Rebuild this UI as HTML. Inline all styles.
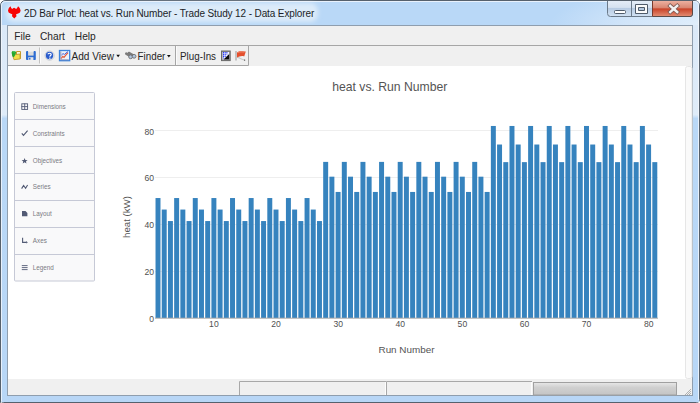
<!DOCTYPE html>
<html><head><meta charset="utf-8">
<style>
*{margin:0;padding:0;box-sizing:border-box}
html,body{width:700px;height:403px;overflow:hidden;background:#fff}
body{position:relative;font-family:"Liberation Sans",sans-serif}
.a{position:absolute}
</style></head><body>
<svg class="a" style="left:0;top:0" width="700" height="403" viewBox="0 0 700 403" font-family="Liberation Sans">
<defs>
<radialGradient id="gGlowR" gradientUnits="userSpaceOnUse" cx="700" cy="24" r="150" gradientTransform="translate(700,24) scale(1,0.25) translate(-700,-24)">
 <stop offset="0" stop-color="#e0eefb" stop-opacity="1"/><stop offset="0.5" stop-color="#dbeafa" stop-opacity="0.7"/><stop offset="1" stop-color="#d8e8fa" stop-opacity="0"/>
</radialGradient>
<filter id="blur" x="-10%" y="-50%" width="120%" height="200%"><feGaussianBlur stdDeviation="2.2"/></filter>
<linearGradient id="gTitle" x1="0" y1="0" x2="1" y2="0">
 <stop offset="0" stop-color="#d6e6f8"/><stop offset="0.45" stop-color="#c4ddf7"/><stop offset="1" stop-color="#b9d7f7"/>
</linearGradient>
<linearGradient id="gLeft" x1="0" y1="0" x2="0" y2="1">
 <stop offset="0" stop-color="#dbe9f8"/><stop offset="0.238" stop-color="#dfecf9"/><stop offset="0.248" stop-color="#b9d8f7"/><stop offset="1" stop-color="#b8d7f7"/>
</linearGradient>
<linearGradient id="gBtn" x1="0" y1="0" x2="0" y2="1">
 <stop offset="0" stop-color="#e6eef8"/><stop offset="0.45" stop-color="#d6e2f0"/><stop offset="0.5" stop-color="#b7cbe3"/><stop offset="1" stop-color="#d2e2f3"/>
</linearGradient>
<linearGradient id="gClose" x1="0" y1="0" x2="0" y2="1">
 <stop offset="0" stop-color="#eeb3a3"/><stop offset="0.45" stop-color="#d98874"/><stop offset="0.55" stop-color="#c9442a"/><stop offset="1" stop-color="#e28a70"/>
</linearGradient>
<linearGradient id="gProg" x1="0" y1="0" x2="0" y2="1">
 <stop offset="0" stop-color="#e8e8e8"/><stop offset="0.4" stop-color="#d0d0d0"/><stop offset="1" stop-color="#c4c4c4"/>
</linearGradient>
</defs>
<!-- window frame -->
<path d="M0.5 402.5 V6 Q0.5 0.5 6 0.5 H694 Q699.5 0.5 699.5 6 V399.5 Q699.5 402.5 696.5 402.5 H3.5 Q0.5 402.5 0.5 399.5 Z" fill="#b8d6f6" stroke="#56616d" stroke-width="1"/>
<rect x="1" y="1" width="698" height="24" fill="#b9d8f7" rx="5"/>
<rect x="1" y="25" width="6" height="377" fill="url(#gLeft)"/>
<rect x="693" y="25" width="6" height="377" fill="url(#gLeft)"/>
<rect x="6" y="3" width="312" height="19" rx="8" fill="#dcebf9" filter="url(#blur)"/>
<rect x="530" y="1" width="169" height="24" fill="url(#gGlowR)"/>
<path d="M1.5 401.5 V6 Q1.5 1.5 6 1.5 H694 Q698.5 1.5 698.5 6 V400" fill="none" stroke="#f4f8fc" stroke-opacity="0.8" stroke-width="1"/>
<!-- client -->
<rect x="7.5" y="25.5" width="685" height="370" fill="#f0f0f0" stroke="#8f9eae" stroke-width="1"/>
<!-- title icon -->
<path fill="#f80404" d="M10.5 6.2 L11.2 8 L12.2 9.1 L13.1 8.3 L14.1 7.7 L15 8.3 L16.1 9.1 L17.1 8 L18.1 6.2 L19.7 8.1 L20.6 10.6 L20 12.4 L18.2 13.4 L16.1 14.3 L16.5 16.2 L14.3 18.6 L12 16.2 L12.3 14.3 L10.4 13.4 L8.6 12.4 L8 10.6 L8.8 8.1 Z"/>
<text x="24" y="16.6" font-size="10" letter-spacing="-0.12" fill="#1b1e28">2D Bar Plot: heat vs. Run Number - Trade Study 12 - Data Explorer</text>
<!-- caption buttons -->
<path d="M607.5 0 V13.5 Q607.5 16.5 610.5 16.5 H690 Q692.5 16.5 692.5 14 V0" fill="url(#gBtn)" stroke="#6b7a8a" stroke-width="1"/>
<path d="M653 0.5 H692 V14 Q692 16 690 16 H653 Z" fill="url(#gClose)"/>
<path d="M652.5 0 V16.5" stroke="#7a3a2c" stroke-width="1"/>
<path d="M631.5 0 V16.5" stroke="#6b7a8a" stroke-width="1"/>
<path d="M692.5 0 V14 Q692.5 16.5 690 16.5 H653" fill="none" stroke="#5a4a48" stroke-width="1"/>
<rect x="614.5" y="10.5" width="11" height="3" rx="1" fill="#fff" stroke="#4f5b6a" stroke-width="1"/>
<path d="M635.5 4.5 H647.5 V13.5 H635.5 Z M638.5 7.5 V10.5 H644.5 V7.5 Z" fill="#fbfbfb" fill-rule="evenodd" stroke="#4f5b6a" stroke-width="1"/>
<rect x="639" y="8" width="5" height="2" fill="#b5c8de"/>
<path d="M670.2 5.8 L677.2 12 M677.2 5.8 L670.2 12" stroke="#7a5650" stroke-width="4" stroke-linecap="square"/>
<path d="M670.2 5.8 L677.2 12 M677.2 5.8 L670.2 12" stroke="#f2f2f2" stroke-width="2.4" stroke-linecap="square"/>
<path d="M600 0.5 H694" stroke="#56616d" stroke-width="1"/>
<!-- menubar -->
<path d="M8 45.5 H692" stroke="#a6a6a6" stroke-width="1"/>
<g font-size="10.2" fill="#262626">
<text x="14.2" y="39.9">File</text><text x="40" y="39.9">Chart</text><text x="74.8" y="39.9">Help</text>
</g>
<!-- toolbar -->
<path d="M8 65.5 H248.5 V46" fill="none" stroke="#a6a6a6" stroke-width="1"/>
<path d="M39.5 47.5 V63.5" stroke="#c2c2c2" stroke-width="1"/><path d="M40.5 47.5 V63.5" stroke="#fbfbfb" stroke-width="1"/>
<path d="M175.5 46 V65" stroke="#a6a6a6" stroke-width="1"/><path d="M176.5 46 V65" stroke="#fbfbfb" stroke-width="1"/>
<!-- open icon -->
<g transform="translate(9,48)">
<path d="M7.5 3.5 H11.5 V10.5 H7.5 Z" fill="#fbf6d8" stroke="#c49a2a" stroke-width="1"/>
<path d="M3.6 7 L10.9 6 L11.2 10.9 L5 11.7 Z" fill="#f2df4a" stroke="#c09a30" stroke-width="0.9"/>
<path d="M2.6 4.8 C2.6 3,4.2 2.8,5.2 2.9 C6.8 3,7.3 4,7 5.2 L6.2 6.8 L5.2 8.8 L4 9.2 L3.2 7.6 Z" fill="#22a82e"/>
<path d="M4 4 C4.6 3.6,5.6 3.6,6 4.2" stroke="#7ad87e" stroke-width="0.8" fill="none"/>
</g>
<!-- save icon -->
<g transform="translate(24,48)">
<path d="M2 4 Q2 3,3 3 H10.8 Q11.8 3,11.8 4 V11.2 Q11.8 12,11 12 H3 Q2 12,2 11.2 Z" fill="#2d6cd2"/>
<rect x="4.1" y="3" width="5.5" height="4.6" fill="#dcdcdc"/>
<rect x="4.1" y="3" width="5.5" height="0.8" fill="#efefef"/>
<rect x="4.3" y="9.2" width="5.1" height="2.8" fill="#e6e6e6"/>
<rect x="5" y="9.8" width="1.5" height="1.8" fill="#3a72d0"/>
</g>
<!-- help icon -->
<circle cx="49.6" cy="55.6" r="4.6" fill="#eef0f4" stroke="#b4bac4" stroke-width="0.7"/>
<circle cx="49.5" cy="55.5" r="3.7" fill="#2a5ccc"/>
<path d="M48 54.3 C48 52.9,51.2 52.8,51.2 54.4 C51.2 55.4,49.8 55.5,49.8 56.8" stroke="#fff" stroke-width="1.2" fill="none"/>
<rect x="49.2" y="57.6" width="1.3" height="1.2" fill="#fff"/>
<!-- chart icon -->
<rect x="59.5" y="50.5" width="10.2" height="10.2" fill="#eef3fa" stroke="#3d84dc" stroke-width="1.3"/>
<path d="M60.8 51.5 V59.8 H68.8" stroke="#7a80a8" stroke-width="0.8" fill="none"/>
<path d="M61.3 58.5 L62.8 56.4 L64 57.4 L65.8 55.2 L68 52.6" stroke="#e45a3a" stroke-width="1.2" fill="none"/>
<path d="M61.5 55 L63 53.6 L64.5 54.4 L66 53 L68 51.6" stroke="#4a62dc" stroke-width="1" fill="none"/>
<g font-size="10.1" fill="#262626">
<text x="71.5" y="59.7">Add View</text>
<text x="137.6" y="59.7" textLength="27.8" lengthAdjust="spacingAndGlyphs">Finder</text>
<text x="180" y="59.7" textLength="36" lengthAdjust="spacingAndGlyphs">Plug-Ins</text>
</g>
<path d="M116.3 54.8 H120 L118.15 57.2 Z" fill="#111"/>
<path d="M167 55 H170.7 L168.85 57.4 Z" fill="#111"/>
<!-- binoculars -->
<g transform="translate(125,52)">
<path d="M1.2 1.6 L5.5 4.2 M3.8 0.9 L8.5 3.6" stroke="#7c7c7c" stroke-width="2.4" stroke-linecap="round"/>
<circle cx="5.6" cy="4.8" r="1.9" fill="#b2c6e0" stroke="#6e6e6e" stroke-width="0.9"/>
<circle cx="9.1" cy="4.3" r="1.9" fill="#b2c6e0" stroke="#6e6e6e" stroke-width="0.9"/>
</g>
<!-- plugin icon -->
<g transform="translate(221,50.5)">
<rect x="0.5" y="0.5" width="8.7" height="9.6" fill="#8a8a8a" stroke="#6a6a6a" stroke-width="1"/>
<rect x="1.5" y="1.5" width="6.7" height="7.6" fill="#f4f4ff"/>
<path d="M2.5 1.5 V8 M4.2 1.5 V6.5 M5.9 1.5 V4" stroke="#2b3ff5" stroke-width="1.1" stroke-dasharray="1.4 0.5"/>
<path d="M2.5 9.1 L8.2 3.4 V9.1 Z" fill="#0c0c0c"/>
</g>
<!-- flag icon -->
<g transform="translate(235,50.5)">
<path d="M1 0.5 V10" stroke="#b4b4b4" stroke-width="1.5"/>
<path d="M2 7 C4 6.5,6 9,9.5 9.5" stroke="#c8c8c8" stroke-width="1.2" fill="none"/>
<circle cx="9.6" cy="9.6" r="0.7" fill="#444"/>
<path d="M2 2.2 C4 0,7 1.2,10.8 1 L9.2 6 C6.5 5,4 6.2,2 7 Z" fill="#e4502e"/>
<path d="M3 2.2 C5 1,7 1.8,9.5 1.6" stroke="#f08a6a" stroke-width="0.8" fill="none"/>
</g>
<!-- content -->
<rect x="8" y="66" width="684" height="313" fill="#fff"/>
<rect x="685.5" y="66.5" width="6.5" height="312" rx="2" fill="#fafafa" stroke="#e6e6e6" stroke-width="1"/>
<!-- status -->
<path d="M239.5 395 V381.5 H386" fill="none" stroke="#a8a8a8" stroke-width="1"/>
<path d="M386.5 395 V381.5 H532" fill="none" stroke="#a8a8a8" stroke-width="1"/>
<path d="M385.5 382 V395 M531.5 382 V395" stroke="#fdfdfd" stroke-width="1"/>
<rect x="533.5" y="382.5" width="143" height="12.5" fill="url(#gProg)" stroke="#a0a0a0" stroke-width="1"/>
<path d="M691 389 L685 395 M691 391 L687 395 M691 393 L689 395" stroke="#b0b0b0" stroke-width="1"/>
<!-- side panel -->
<rect x="14.5" y="92.5" width="80" height="188.5" rx="1" fill="#f9f9fa" stroke="#c6c9d6" stroke-width="1"/>
<path d="M15 119.5 H94 M15 146.5 H94 M15 173.5 H94 M15 200.5 H94 M15 227.5 H94 M15 254.5 H94" stroke="#c6c9d6" stroke-width="1"/>
<g font-size="6.3" fill="#7a7a82">
<text x="32.8" y="108.9">Dimensions</text><text x="32.8" y="135.8">Constraints</text><text x="32.8" y="162.6">Objectives</text>
<text x="32.8" y="189.4">Series</text><text x="32.8" y="216.3">Layout</text><text x="32.8" y="243.2">Axes</text><text x="32.8" y="270">Legend</text>
</g>
<g fill="none" stroke="#525a74">
<rect x="21.8" y="103.8" width="5.8" height="5.6" stroke-width="0.9"/><path d="M24.7 103.5 V109.7 M21.5 106.6 H28" stroke-width="0.9"/>
<path d="M21.8 133.3 L23.5 135.4 L27.6 130.6" stroke-width="1.1"/>
<path d="M21.6 188.6 L23.6 185.4 L25.6 188.2 L27.6 185" stroke-width="1.1"/>
<path d="M22.6 237.7 V242.4 H26.5" stroke-width="1.1"/>
<path d="M21.8 265.6 H27.6 M21.8 267.6 H27.6 M21.8 269.6 H27.6" stroke-width="0.9"/>
</g>
<path d="M26.2 241 L27.8 242.4 L26.2 243.6 Z" fill="#525a74"/>
<path d="M24.6 158 L25.4 160 L27.6 160.2 L25.9 161.5 L26.5 163.5 L24.6 162.3 L22.7 163.5 L23.3 161.5 L21.6 160.2 L23.8 160 Z" fill="#525a74"/>
<path d="M22 211.1 H25.5 L27.4 213 V216.3 H22 Z" fill="#525a74"/>
<!-- chart -->
<path d="M155 130.5 H658 M155 177.5 H658 M155 224.5 H658 M155 271.5 H658" stroke="#eee" stroke-width="1"/>
<g fill="#3683be">
<rect x="155.52" y="198.04" width="4.97" height="119.96"/>
<rect x="161.73" y="209.55" width="4.97" height="108.45"/>
<rect x="167.94" y="221.05" width="4.97" height="96.95"/>
<rect x="174.15" y="198.04" width="4.97" height="119.96"/>
<rect x="180.36" y="209.55" width="4.97" height="108.45"/>
<rect x="186.57" y="221.05" width="4.97" height="96.95"/>
<rect x="192.78" y="198.04" width="4.97" height="119.96"/>
<rect x="198.99" y="209.55" width="4.97" height="108.45"/>
<rect x="205.20" y="221.05" width="4.97" height="96.95"/>
<rect x="211.41" y="198.04" width="4.97" height="119.96"/>
<rect x="217.62" y="209.55" width="4.97" height="108.45"/>
<rect x="223.83" y="221.05" width="4.97" height="96.95"/>
<rect x="230.04" y="198.04" width="4.97" height="119.96"/>
<rect x="236.25" y="209.55" width="4.97" height="108.45"/>
<rect x="242.46" y="221.05" width="4.97" height="96.95"/>
<rect x="248.67" y="198.04" width="4.97" height="119.96"/>
<rect x="254.88" y="209.55" width="4.97" height="108.45"/>
<rect x="261.09" y="221.05" width="4.97" height="96.95"/>
<rect x="267.30" y="198.04" width="4.97" height="119.96"/>
<rect x="273.51" y="209.55" width="4.97" height="108.45"/>
<rect x="279.72" y="221.05" width="4.97" height="96.95"/>
<rect x="285.93" y="198.04" width="4.97" height="119.96"/>
<rect x="292.14" y="209.55" width="4.97" height="108.45"/>
<rect x="298.35" y="221.05" width="4.97" height="96.95"/>
<rect x="304.56" y="198.04" width="4.97" height="119.96"/>
<rect x="310.77" y="209.55" width="4.97" height="108.45"/>
<rect x="316.98" y="221.05" width="4.97" height="96.95"/>
<rect x="323.19" y="161.89" width="4.97" height="156.11"/>
<rect x="329.40" y="176.68" width="4.97" height="141.32"/>
<rect x="335.61" y="191.94" width="4.97" height="126.06"/>
<rect x="341.82" y="161.89" width="4.97" height="156.11"/>
<rect x="348.03" y="176.68" width="4.97" height="141.32"/>
<rect x="354.24" y="191.94" width="4.97" height="126.06"/>
<rect x="360.45" y="161.89" width="4.97" height="156.11"/>
<rect x="366.66" y="176.68" width="4.97" height="141.32"/>
<rect x="372.87" y="191.94" width="4.97" height="126.06"/>
<rect x="379.08" y="161.89" width="4.97" height="156.11"/>
<rect x="385.29" y="176.68" width="4.97" height="141.32"/>
<rect x="391.50" y="191.94" width="4.97" height="126.06"/>
<rect x="397.71" y="161.89" width="4.97" height="156.11"/>
<rect x="403.92" y="176.68" width="4.97" height="141.32"/>
<rect x="410.13" y="191.94" width="4.97" height="126.06"/>
<rect x="416.34" y="161.89" width="4.97" height="156.11"/>
<rect x="422.55" y="176.68" width="4.97" height="141.32"/>
<rect x="428.76" y="191.94" width="4.97" height="126.06"/>
<rect x="434.97" y="161.89" width="4.97" height="156.11"/>
<rect x="441.18" y="176.68" width="4.97" height="141.32"/>
<rect x="447.39" y="191.94" width="4.97" height="126.06"/>
<rect x="453.60" y="161.89" width="4.97" height="156.11"/>
<rect x="459.81" y="176.68" width="4.97" height="141.32"/>
<rect x="466.02" y="191.94" width="4.97" height="126.06"/>
<rect x="472.23" y="161.89" width="4.97" height="156.11"/>
<rect x="478.44" y="176.68" width="4.97" height="141.32"/>
<rect x="484.65" y="191.94" width="4.97" height="126.06"/>
<rect x="490.86" y="125.97" width="4.97" height="192.03"/>
<rect x="497.07" y="144.52" width="4.97" height="173.48"/>
<rect x="503.28" y="162.13" width="4.97" height="155.87"/>
<rect x="509.49" y="125.97" width="4.97" height="192.03"/>
<rect x="515.70" y="144.52" width="4.97" height="173.48"/>
<rect x="521.91" y="162.13" width="4.97" height="155.87"/>
<rect x="528.12" y="125.97" width="4.97" height="192.03"/>
<rect x="534.33" y="144.52" width="4.97" height="173.48"/>
<rect x="540.54" y="162.13" width="4.97" height="155.87"/>
<rect x="546.75" y="125.97" width="4.97" height="192.03"/>
<rect x="552.96" y="144.52" width="4.97" height="173.48"/>
<rect x="559.17" y="162.13" width="4.97" height="155.87"/>
<rect x="565.38" y="125.97" width="4.97" height="192.03"/>
<rect x="571.59" y="144.52" width="4.97" height="173.48"/>
<rect x="577.80" y="162.13" width="4.97" height="155.87"/>
<rect x="584.01" y="125.97" width="4.97" height="192.03"/>
<rect x="590.22" y="144.52" width="4.97" height="173.48"/>
<rect x="596.43" y="162.13" width="4.97" height="155.87"/>
<rect x="602.64" y="125.97" width="4.97" height="192.03"/>
<rect x="608.85" y="144.52" width="4.97" height="173.48"/>
<rect x="615.06" y="162.13" width="4.97" height="155.87"/>
<rect x="621.27" y="125.97" width="4.97" height="192.03"/>
<rect x="627.48" y="144.52" width="4.97" height="173.48"/>
<rect x="633.69" y="162.13" width="4.97" height="155.87"/>
<rect x="639.90" y="125.97" width="4.97" height="192.03"/>
<rect x="646.11" y="144.52" width="4.97" height="173.48"/>
<rect x="652.32" y="162.13" width="4.97" height="155.87"/>
</g>
<path d="M155 318.2 H658" stroke="#a8a8a8" stroke-width="1"/>
<g font-size="8.6" text-anchor="end" fill="#505050">
<text x="154" y="321.7">0</text><text x="154" y="274.8">20</text><text x="154" y="227.8">40</text><text x="154" y="180.9">60</text><text x="154" y="134.9">80</text>
</g>
<g font-size="8.6" text-anchor="middle" fill="#505050">
<text x="213.9" y="326.7">10</text><text x="276.1" y="326.7">20</text><text x="338.2" y="326.7">30</text><text x="400.3" y="326.7">40</text><text x="462.4" y="326.7">50</text><text x="524.5" y="326.7">60</text><text x="586.6" y="326.7">70</text><text x="648.7" y="326.7">80</text>
</g>
<text x="389.8" y="91.3" font-size="12.2" text-anchor="middle" fill="#545454">heat vs. Run Number</text>
<text x="406.5" y="352.7" font-size="9.9" text-anchor="middle" fill="#545454">Run Number</text>
<text transform="translate(129.9,217) rotate(-90)" x="0" y="0" font-size="9.7" text-anchor="middle" fill="#545454">heat (kW)</text>
</svg>
</body></html>
